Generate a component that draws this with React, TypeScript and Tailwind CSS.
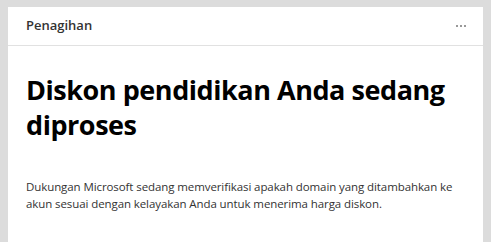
export default function App() {
  return (
    <div className="h-[242px] w-[491px] overflow-hidden bg-[#dcdcdc] px-2 pt-[7px] font-['Open_Sans',sans-serif]">
      <div className="h-full bg-white">
        <div className="flex h-[39px] items-center justify-between border-b border-[#e1e1e1] pl-[18px] pr-[17px]">
          <span className="text-[13px] font-semibold text-[#333]">Penagihan</span>
          <span className="flex gap-[2px]">
            <span className="h-[2px] w-[2px] bg-[#999]"></span>
            <span className="h-[2px] w-[2px] bg-[#999]"></span>
            <span className="h-[2px] w-[2px] bg-[#999]"></span>
          </span>
        </div>
        <div className="px-[18px] pt-[26px]">
          <h1 className="text-[27px] font-bold leading-[35px] tracking-[-0.45px] text-black">Diskon pendidikan Anda sedang diproses</h1>
          <p className="mt-[36px] max-w-[440px] text-[11.5px] leading-[17px] tracking-[-0.09px] text-[#333]">
            Dukungan Microsoft sedang memverifikasi apakah domain yang ditambahkan ke akun sesuai dengan kelayakan Anda untuk menerima harga diskon.
          </p>
        </div>
      </div>
    </div>
  );
}
